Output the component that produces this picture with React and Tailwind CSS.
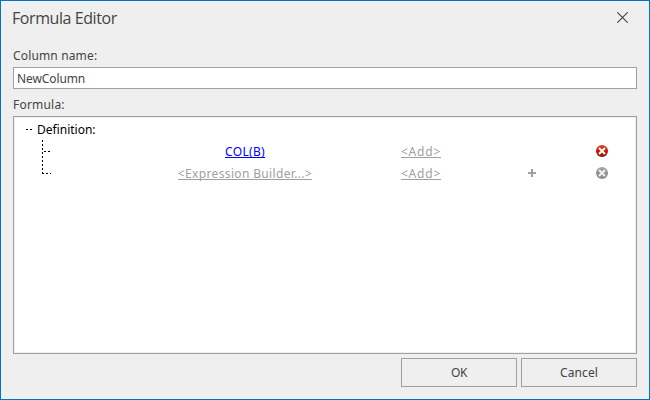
import React from "react";

function CloseIcon() {
  return (
    <svg width="11" height="11" viewBox="0 0 11 11" fill="none" stroke="#444444" strokeWidth="1.1">
      <path d="M0.3 0.3 10.7 10.7M10.7 0.3 0.3 10.7" />
    </svg>
  );
}

function RemoveIcon({ disabled }) {
  const id = disabled ? "ball-off" : "ball-on";
  return (
    <svg width="12" height="12" viewBox="0 0 12 12">
      <defs>
        <linearGradient id={id} x1="0" y1="0" x2="0" y2="1">
          <stop offset="0" stopColor={disabled ? "#a6a6a6" : "#e0432c"} />
          <stop offset="0.5" stopColor={disabled ? "#929292" : "#cf1500"} />
          <stop offset="1" stopColor={disabled ? "#8e8e8e" : "#8e1608"} />
        </linearGradient>
      </defs>
      <circle cx="6" cy="6" r="6" fill={`url(#${id})`} />
      <path d="M3 3 9 9M9 3 3 9" stroke={disabled ? "#f0f0f0" : "#ffffff"} strokeWidth="2.1" />
    </svg>
  );
}

function PlusIcon() {
  return (
    <svg width="8" height="8" viewBox="0 0 8 8" fill="#a0a0a0" shapeRendering="crispEdges">
      <path d="M3 0h2v3h3v2H5v3H3V5H0V3h3z" />
    </svg>
  );
}

function Row({ children, tone, label }) {
  return (
    <div className="grid h-[22px] grid-cols-[216px_136px_86px_54px] items-center pl-[122px]">
      <div className="flex justify-center whitespace-nowrap">
        <span className={`border-b pt-[2px] leading-[11px] ${tone}`}>{label}</span>
      </div>
      <div className="flex justify-center whitespace-nowrap">
        <span className="border-b border-[#a0a0a0] pt-[2px] leading-[11px] tracking-[0.8px] text-[#a0a0a0]">&lt;Add&gt;</span>
      </div>
      {children}
    </div>
  );
}

export default function App() {
  return (
    <div className="flex h-[400px] w-[650px] flex-col border border-[#0173c7] bg-[#efefef] px-3 font-['Noto_Sans',sans-serif] text-[12px] text-[#444444]">
      <header className="flex h-[46px] items-start justify-between pr-[9px]">
        <h1 className="-ml-px pt-[5px] font-['Open_Sans',sans-serif] text-[16px] leading-6 tracking-[-0.42px]">Formula Editor</h1>
        <button className="pt-[11px]"><CloseIcon /></button>
      </header>
      <label className="h-5 leading-[18px] tracking-[0.15px]">Column name:</label>
      <div className="h-[22px] border border-[#a0a0a0] bg-white pl-[3px] pt-px leading-5 tracking-[-0.1px]">NewColumn</div>
      <label className="h-[27px] pt-[7px] leading-[18px] tracking-[0.2px]">Formula:</label>
      <div className="h-[238px] border border-[#a0a0a0] bg-white p-px shadow-[inset_0_0_0_1px_#efefef]">
        <div className="flex h-[22px] items-center pl-[11px] text-black">
          <svg width="11" height="11" shapeRendering="crispEdges">
            <path d="M0 5.5h2M4 5.5h2" stroke="#000" />
          </svg>
          <span className="pt-[2px]">Definition:</span>
        </div>
        <div className="flex">
          <svg className="h-11 w-[36px] shrink-0" shapeRendering="crispEdges" stroke="#000" fill="none">
            <path d="M27.5 0v34" strokeDasharray="2 2" />
            <path d="M29 11.5h2M33 11.5h2M27 33.5h2M31 33.5h2M35 33.5h1" />
          </svg>
          <div className="-ml-[36px] w-[620px]">
            <Row label="COL(B)" tone="text-[#0000ff] border-[#0000ff] tracking-[0.3px]">
              <span />
              <span className="flex justify-center"><RemoveIcon /></span>
            </Row>
            <Row label="<Expression Builder...>" tone="text-[#a0a0a0] border-[#a0a0a0] tracking-[0.35px]">
              <span className="flex justify-center"><PlusIcon /></span>
              <span className="flex justify-center"><RemoveIcon disabled /></span>
            </Row>
          </div>
        </div>
      </div>
      <footer className="mt-1 flex justify-end gap-1">
        <button className="h-[29px] w-[116px] border border-[#a0a0a0] tracking-[-0.3px]">OK</button>
        <button className="h-[29px] w-[116px] border border-[#a0a0a0] tracking-[0.1px]">Cancel</button>
      </footer>
    </div>
  );
}
